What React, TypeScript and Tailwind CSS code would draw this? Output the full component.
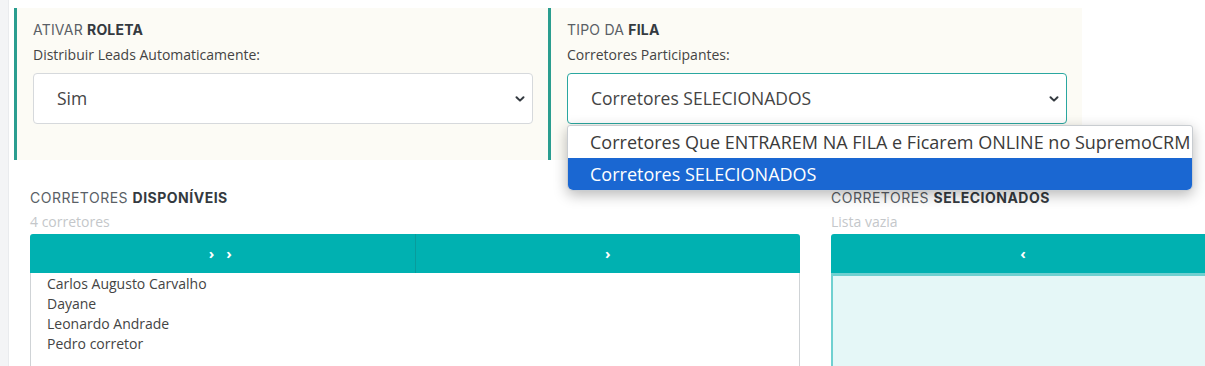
import React from "react";

const head = { fontFamily: "Inter, 'Liberation Sans', sans-serif" };
const body = { fontFamily: "'Open Sans', 'Liberation Sans', sans-serif" };

function Chevron() {
  return (
    <svg width="10" height="8" viewBox="0 0 10 8" fill="none">
      <path d="M1.5 2.2 5 5.6l3.5-3.4" stroke="#343a40" strokeWidth="2" strokeLinecap="round" strokeLinejoin="round" />
    </svg>
  );
}

function Title({ light, bold, wide }: { light: string; bold: string; wide?: boolean }) {
  return (
    <div
      className={
        "leading-4 text-[#5a5f66] " + (wide ? "text-[14px] tracking-[0.5px]" : "text-[14px] tracking-[0.2px]")
      }
      style={head}
    >
      {light} <span className="font-bold text-[#343a40]">{bold}</span>
    </div>
  );
}

function Panel({
  light,
  bold,
  label,
  value,
  focused,
  children,
}: {
  light: string;
  bold: string;
  label: string;
  value: string;
  focused?: boolean;
  children?: React.ReactNode;
}) {
  return (
    <div className="w-[534px] h-[152px] bg-[#fcfbf5] border-l-[3px] border-[#2a9d8f] pl-[16px] pr-[15px] pt-[14px]">
      <Title light={light} bold={bold} />
      <div className="mt-[7px] text-[14px] leading-5 text-[#444]" style={body}>
        {label}
      </div>
      <div className="relative mt-[8px]">
        <div
          className={
            "h-[51px] w-[500px] rounded-[4px] bg-white flex items-center justify-between pl-[23px] pr-[4px] text-[17.5px] text-[#444] border " +
            (focused ? "border-[#2aa7a0]" : "border-[#d6d9dc]")
          }
          style={body}
        >
          <span>{value}</span>
          <span className="w-[16px] flex justify-center">
            <Chevron />
          </span>
        </div>
        {children}
      </div>
    </div>
  );
}

export default function App() {
  const names = ["Carlos Augusto Carvalho", "Dayane", "Leonardo Andrade", "Pedro corretor"];
  return (
    <div className="flex h-[366px] overflow-hidden bg-white">
      <div className="w-[9px] shrink-0 bg-[#f3f4f6] border-r border-[#e9ebee]" />
      <div className="flex-1 pl-[5px] pt-[8px]">
        <div className="flex">
          <Panel light="ATIVAR" bold="ROLETA" label="Distribuir Leads Automaticamente:" value="Sim" />
          <Panel
            light="TIPO DA"
            bold="FILA"
            label="Corretores Participantes:"
            value="Corretores SELECIONADOS"
            focused
          >
            <div
              className="absolute left-0 top-[52px] z-10 w-[626px] overflow-hidden rounded-b-[6px] rounded-t-[3px] bg-white text-[18px] text-[#3b3b3b] shadow-[0_4px_14px_rgba(0,0,0,0.28)] border border-[#c9cdd1]"
              style={body}
            >
              <div className="h-[32px] flex items-center pl-[22px] whitespace-nowrap">
                Corretores Que ENTRAREM NA FILA e Ficarem ONLINE no SupremoCRM
              </div>
              <div className="h-[32px] flex items-center pl-[22px] bg-[#1a67d2] text-white">
                Corretores SELECIONADOS
              </div>
            </div>
          </Panel>
        </div>

        <div className="flex pl-[16px] pt-[30px] gap-[31px]">
          <div className="w-[770px] shrink-0">
            <Title light="CORRETORES" bold="DISPONÍVEIS" wide />
            <div className="mt-[8px] text-[14px] leading-4 text-[#c4c7ca]" style={body}>
              4 corretores
            </div>
            <div className="mt-[4px] h-[39px] flex rounded-t-[3px] bg-[#00b1b1] text-white text-[15px] font-bold" style={body}>
              <div className="flex-1 flex items-center justify-center border-r border-[#089c9c] tracking-[4px]">› ›</div>
              <div className="flex-1 flex items-center justify-center">›</div>
            </div>
            <div className="h-[100px] border border-t-0 border-[#cfd3d6] bg-white pl-[16px] pt-[1px] text-[14px] leading-5 text-[#444]" style={body}>
              {names.map((n) => (
                <div key={n}>{n}</div>
              ))}
            </div>
          </div>
          <div className="w-[384px] shrink-0">
            <Title light="CORRETORES" bold="SELECIONADOS" wide />
            <div className="mt-[8px] text-[14px] leading-4 text-[#c4c7ca]" style={body}>
              Lista vazia
            </div>
            <div className="mt-[4px] h-[39px] flex items-center justify-center rounded-t-[3px] bg-[#00b1b1] text-white text-[15px] font-bold" style={body}>
              ‹
            </div>
            <div className="h-[100px] border-2 border-t-[3px] border-[#6fd0d0] bg-[#e5f7f7]" />
          </div>
        </div>
      </div>
    </div>
  );
}
